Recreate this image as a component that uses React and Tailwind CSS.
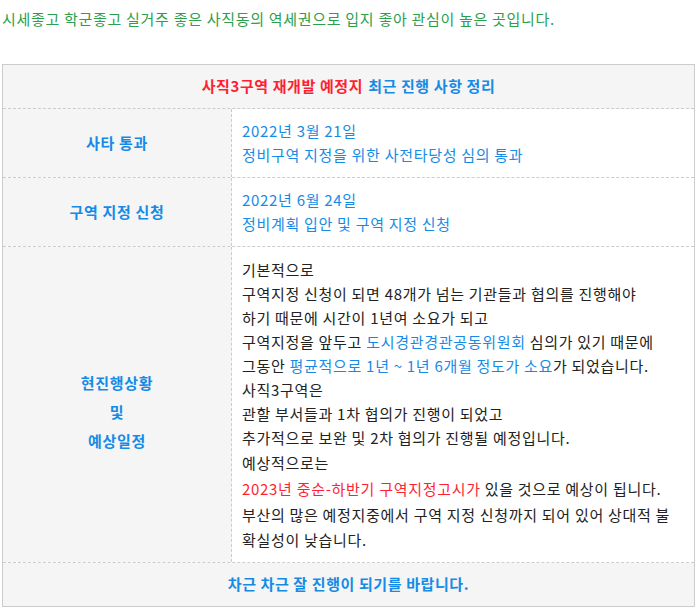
import React from 'react';

const font = { fontFamily: '"Noto Sans CJK KR", "Noto Sans", sans-serif' };

const Blue = ({ children }) => <span className="text-[#168be6]">{children}</span>;
const Red = ({ children }) => <span className="text-[#ff1f33]">{children}</span>;

export default function App() {
  return (
    <div className="bg-white w-[697px] h-[612px] text-[15px] tracking-[0.7px] text-[#222]" style={font}>
      {/* 상단 소개 문구 */}
      <p className="h-[38px] leading-[38px] pl-[2px] text-[#2b9f4b]">
        시세좋고 학군좋고 실거주 좋은 사직동의 역세권으로 입지 좋아 관심이 높은 곳입니다.
      </p>

      <div className="mt-[26px] mx-[2px] border border-[#cccccc]">
        {/* 제목 */}
        <div className="h-[44px] flex items-center justify-center bg-[#f5f5f5] font-bold tracking-[0.6px] border-b border-dashed border-[#cccccc]">
          <Red>사직3구역 재개발 예정지</Red>
          <span className="w-[5px]" />
          <Blue>최근 진행 사항 정리</Blue>
        </div>

        {/* 사타 통과 */}
        <div className="grid grid-cols-[229px_1fr] border-b border-dashed border-[#cccccc]">
          <div className="bg-[#f5f5f5] flex items-center justify-center font-bold text-[#168be6] border-r border-dashed border-[#cccccc]">
            사타 통과
          </div>
          <div className="pl-[10px] py-[10px] leading-[24px] text-[#168be6]">
            <p>2022년 3월 21일</p>
            <p>정비구역 지정을 위한 사전타당성 심의 통과</p>
          </div>
        </div>

        {/* 구역 지정 신청 */}
        <div className="grid grid-cols-[229px_1fr] border-b border-dashed border-[#cccccc]">
          <div className="bg-[#f5f5f5] flex items-center justify-center font-bold text-[#168be6] border-r border-dashed border-[#cccccc]">
            구역 지정 신청
          </div>
          <div className="pl-[10px] py-[10px] leading-[24px] text-[#168be6]">
            <p>2022년 6월 24일</p>
            <p>정비계획 입안 및 구역 지정 신청</p>
          </div>
        </div>

        {/* 현진행상황 및 예상일정 */}
        <div className="grid grid-cols-[229px_1fr] border-b border-dashed border-[#cccccc]">
          <div className="bg-[#f5f5f5] flex flex-col items-center justify-center pt-[14px] font-bold text-[#168be6] leading-[29px] border-r border-dashed border-[#cccccc]">
            <p>현진행상황</p>
            <p>및</p>
            <p>예상일정</p>
          </div>
          <div className="pl-[10px] pt-[11px] pb-[10px] leading-[24px]">
            <p>기본적으로</p>
            <p>구역지정 신청이 되면 48개가 넘는 기관들과 협의를 진행해야</p>
            <p>하기 때문에 시간이 1년여 소요가 되고</p>
            <p>구역지정을 앞두고 <Blue>도시경관경관공동위원회</Blue> 심의가 있기 때문에</p>
            <p>그동안 <Blue>평균적으로 1년 ~ 1년 6개월 정도가 소요</Blue>가 되었습니다.</p>
            <p>사직3구역은</p>
            <p>관할 부서들과 1차 협의가 진행이 되었고</p>
            <p>추가적으로 보완 및 2차 협의가 진행될 예정입니다.</p>
            <p className="leading-[25px]">예상적으로는</p>
            <p className="leading-[27px]"><Red>2023년 중순-하반기 구역지정고시가</Red> 있을 것으로 예상이 됩니다.</p>
            <p className="leading-[25px]">부산의 많은 예정지중에서 구역 지정 신청까지 되어 있어 상대적 불</p>
            <p className="leading-[25px]">확실성이 낮습니다.</p>
          </div>
        </div>

        {/* 마무리 */}
        <div className="h-[43px] flex items-center justify-center bg-[#f5f5f5] font-bold tracking-[0.6px] text-[#168be6]">
          차근 차근 잘 진행이 되기를 바랍니다.
        </div>
      </div>
    </div>
  );
}
